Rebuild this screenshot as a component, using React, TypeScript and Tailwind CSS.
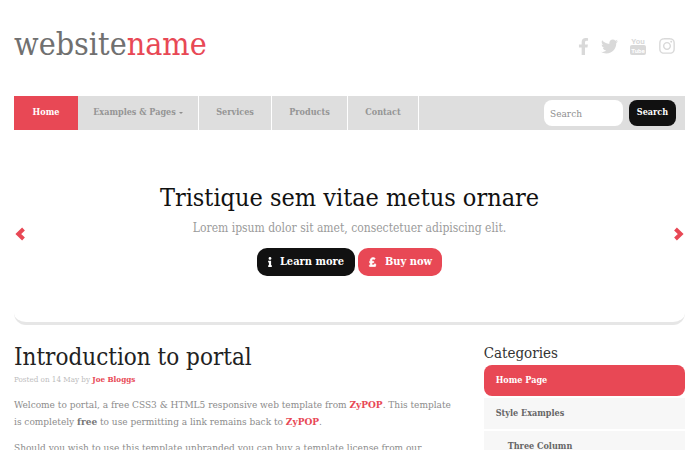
import React, { useState } from "react";
import { FaFacebookF, FaInfo, FaInstagram, FaPoundSign, FaTwitter } from "react-icons/fa";

type NavItem = {
  label: string;
  width: string;
  hasMenu?: boolean;
};

const NAV_ITEMS: NavItem[] = [
  { label: "Home", width: "w-16" },
  { label: "Examples & Pages", width: "w-[121px]", hasMenu: true },
  { label: "Services", width: "w-[73px]" },
  { label: "Products", width: "w-[76px]" },
  { label: "Contact", width: "w-[71px]" },
];

const CATEGORIES = [
  { label: "Home Page", nested: false },
  { label: "Style Examples", nested: false },
  { label: "Three Column", nested: true },
];

function YoutubeIcon() {
  return (
    <svg
      viewBox="0 0 16 20"
      className="h-5 w-4 overflow-visible font-[Roboto,sans-serif] font-bold"
      fill="currentColor"
      aria-hidden="true"
    >
      <text x="8" y="8" textAnchor="middle" fontSize="8">
        You
      </text>
      <rect x="0" y="9" width="16" height="10" rx="2" />
      <text x="8" y="17" textAnchor="middle" fontSize="6" fill="#fff">
        Tube
      </text>
    </svg>
  );
}

function Chevron({ flip = false }: { flip?: boolean }) {
  return (
    <svg
      viewBox="0 0 10 14"
      className={flip ? "h-[14px] w-[10px] -scale-x-100" : "h-[14px] w-[10px]"}
      fill="none"
      stroke="currentColor"
      strokeWidth="4"
      aria-hidden="true"
    >
      <path d="M8.500 2 3.300 7l5.200 5" />
    </svg>
  );
}

function Header() {
  return (
    <header className="flex items-center justify-between pt-6 pb-8">
      <a href="#" className="text-[32px] leading-10 text-[#707070]">
        website<span className="text-[#e84855]">name</span>
      </a>
      <div className="flex items-center gap-3 pt-1 pr-[9px] text-[#d9d9d9]">
        <a href="#" aria-label="Facebook"><FaFacebookF className="h-[17px] w-[11px]" /></a>
        <a href="#" aria-label="Twitter"><FaTwitter className="size-[17px]" /></a>
        <a href="#" aria-label="YouTube"><YoutubeIcon /></a>
        <a href="#" aria-label="Instagram"><FaInstagram className="size-[18px]" /></a>
      </div>
    </header>
  );
}

function NavBar() {
  const [query, setQuery] = useState("");

  return (
    <nav className="flex items-center justify-between bg-[#dedede] text-[9px] font-bold">
      <ul className="flex">
        {NAV_ITEMS.map((item, index) => (
          <li key={item.label} className={item.width}>
            <a
              href="#"
              className={
                index === 0
                  ? "flex h-[34px] items-center justify-center bg-[#e84855] text-white"
                  : "flex h-[34px] items-center justify-center gap-[3px] border-r border-white whitespace-nowrap text-[#959595]"
              }
            >
              {item.label}
              {item.hasMenu && <span className="border-x-2 border-t-2 border-x-transparent border-t-[#8f8f8f]" />}
            </a>
          </li>
        ))}
      </ul>
      <form className="flex gap-[6px] pr-[9px]" onSubmit={(event) => event.preventDefault()}>
        <input
          type="text"
          aria-label="Search"
          placeholder="Search"
          value={query}
          onChange={(event) => setQuery(event.target.value)}
          className="h-[26px] w-[79px] rounded-lg bg-white px-[6px] text-[10px] font-normal text-[#555] placeholder:text-[#8f8f8f]"
        />
        <button type="submit" className="h-[26px] w-[47px] rounded-lg bg-[#111] text-white">
          Search
        </button>
      </form>
    </nav>
  );
}

function Slider() {
  return (
    <section className="flex items-center justify-between rounded-b-xl border-b-3 border-[#e6e6e6] px-px pt-4">
      <button type="button" aria-label="Previous" className="text-[#e84855]"><Chevron /></button>
      <div className="pt-9 pb-[46px] text-center">
        <h2 className="text-[25px] leading-8 text-[#111]">Tristique sem vitae metus ornare</h2>
        <p className="text-[12px] leading-7 text-[#9b9b9b]">
          Lorem ipsum dolor sit amet, consectetuer adipiscing elit.
        </p>
        <div className="mt-[6px] flex justify-center gap-[3px] text-[11px] font-bold text-white">
          <a href="#" className="flex h-7 items-center gap-2 rounded-[10px] bg-[#111] px-[11px]">
            <FaInfo className="h-[10px] w-1" />Learn more
          </a>
          <a href="#" className="flex h-7 items-center gap-2 rounded-[10px] bg-[#e84855] px-[10px]">
            <FaPoundSign className="h-[10px] w-[9px] stroke-current stroke-[40]" />Buy now
          </a>
        </div>
      </div>
      <button type="button" aria-label="Next" className="text-[#e84855]"><Chevron flip /></button>
    </section>
  );
}

function Article() {
  return (
    <article className="min-w-0 flex-1 text-[10px] leading-[17px] text-[#8c8c8c]">
      <h1 className="text-[24px] leading-8 text-[#222]">Introduction to portal</h1>
      <p className="text-[8px] leading-3 text-[#bdbdbd]">
        Posted on 14 May by <a href="#" className="font-bold text-[#e84855]">Joe Bloggs</a>
      </p>
      <p className="mt-[10px]">
        Welcome to portal, a free CSS3 &amp; HTML5 responsive web template from{" "}
        <a href="#" className="font-bold text-[#e84855]">ZyPOP</a>. This template
        <br />
        is completely <strong className="text-[#777]">free</strong> to use permitting a link remains back to{" "}
        <a href="#" className="font-bold text-[#e84855]">ZyPOP</a>.
      </p>
      <p className="mt-[9px]">
        Should you wish to use this template unbranded you can buy a template license from our
      </p>
    </article>
  );
}

function Sidebar() {
  return (
    <aside className="w-[30%]">
      <h3 className="text-[15px] leading-6 text-[#333]">Categories</h3>
      <ul className="flex flex-col gap-[2px] text-[9px] font-bold">
        {CATEGORIES.map((category, index) => (
          <li key={category.label}>
            <a
              href="#"
              className={
                index === 0
                  ? "flex h-[31px] items-center rounded-lg bg-[#e84855] px-3 text-white"
                  : category.nested
                    ? "flex h-[31px] items-center bg-[#f7f7f7] pr-3 pl-6 text-[#666]"
                    : "flex h-[31px] items-center bg-[#f7f7f7] px-3 text-[#666]"
              }
            >
              {category.label}
            </a>
          </li>
        ))}
      </ul>
    </aside>
  );
}

export default function App() {
  return (
    <div className="h-screen overflow-hidden bg-white pr-[15px] pl-[14px] font-['DejaVu_Serif_Condensed','DejaVu_Serif',serif]">
      <Header />
      <NavBar />
      <Slider />
      <main className="flex gap-6 pt-4">
        <Article />
        <Sidebar />
      </main>
    </div>
  );
}
